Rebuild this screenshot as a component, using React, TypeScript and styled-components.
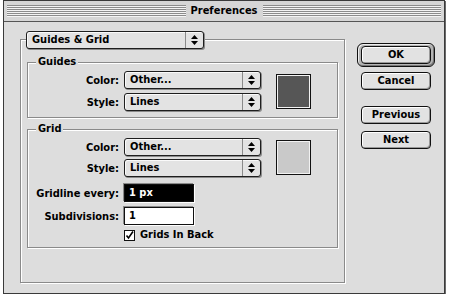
import styled, { createGlobalStyle } from "styled-components";

const GlobalStyle = createGlobalStyle`
  body {
    margin: 0;
    background: #ffffff;
    font-family: "DejaVu Sans Condensed", "DejaVu Sans", sans-serif;
    font-weight: bold;
    font-size: 11px;
    color: #000;
  }
`;

//#region window
const Window = styled.div`
  box-sizing: border-box;
  margin-left: 3px;
  width: 442px;
  height: 294px;
  border: 1px solid #3a3a3a;
  box-shadow: 1px 1px 0 #6a6a6a;
  background: #dddddd;
  display: flex;
  flex-direction: column;
`;

const TitleBar = styled.div`
  height: 20px;
  border-bottom: 1px solid #555;
  background: #d6d6d6;
  display: flex;
  align-items: center;
  padding: 0 3px 0 3px;
  gap: 5px;
`;

const Stripes = styled.div`
  flex: 1;
  height: 12px;
  background: repeating-linear-gradient(to bottom, #8c8c8c 0 1px, #f4f4f4 1px 2px);
`;

const Title = styled.div`
  font-size: 11px;
  line-height: 14px;
`;

const Body = styled.div`
  display: flex;
  align-items: flex-start;
`;
//#endregion window

//#region groups
const OuterGroup = styled.div`
  box-sizing: border-box;
  margin: 17px 0 0 16px;
  width: 325px;
  height: 244px;
  border: 1px solid #8a8a8a;
  box-shadow: 1px 1px 0 #fff, inset 1px 1px 0 #fff;
  padding: 0 6px;
  display: flex;
  flex-direction: column;
`;

const Group = styled.div<{ $height: number; $gap: number }>`
  box-sizing: border-box;
  height: ${(p) => p.$height}px;
  margin-top: ${(p) => p.$gap}px;
  border: 1px solid #8a8a8a;
  box-shadow: 1px 1px 0 #fff, inset 1px 1px 0 #fff;
  display: flex;
  flex-direction: column;
`;

const Legend = styled.div`
  align-self: flex-start;
  margin: -8px 0 0 8px;
  padding: 0 2px;
  line-height: 14px;
  background: #dddddd;
`;

const FormGrid = styled.div<{ $rowGap: number }>`
  display: grid;
  grid-template-columns: 91px 137px auto;
  column-gap: 5px;
  row-gap: ${(p) => p.$rowGap}px;
  align-items: center;
  margin-top: 2px;
`;

const Label = styled.div<{ $top?: number }>`
  grid-column: 1;
  text-align: right;
  white-space: nowrap;
  margin-top: ${(p) => p.$top ?? 0}px;
`;

const Cell = styled.div<{ $top?: number }>`
  grid-column: 2;
  margin-top: ${(p) => p.$top ?? 0}px;
  display: flex;
`;

const HeaderPopup = styled.div`
  margin: -9px 0 0 -1px;
  display: flex;
`;
//#endregion groups

//#region controls
const PopupBox = styled.div<{ $width: number }>`
  box-sizing: border-box;
  width: ${(p) => p.$width}px;
  height: 18px;
  border: 1px solid #1e1e1e;
  border-radius: 3px;
  background: #e3e3e3;
  box-shadow: inset 1px 1px 0 #fafafa, 1px 1px 0 #8a8a8a;
  display: flex;
  align-items: center;
`;

const PopupText = styled.div`
  flex: 1;
  padding-left: 5px;
  line-height: 14px;
`;

const PopupArrows = styled.div`
  width: 17px;
  height: 100%;
  border-left: 1px solid #8a8a8a;
  display: flex;
  align-items: center;
  justify-content: center;
`;

const Swatch = styled.div<{ $fill: string }>`
  grid-row: 1 / 3;
  grid-column: 3;
  margin-left: 10px;
  width: 35px;
  height: 35px;
  box-sizing: border-box;
  border: 1px solid #111;
  box-shadow: inset 0 0 0 1px #f2f2f2;
  background: ${(p) => p.$fill};
`;

const TextField = styled.div<{ $selected?: boolean }>`
  box-sizing: border-box;
  width: 70px;
  height: 18px;
  border: 1px solid #111;
  box-shadow: -1px -1px 0 #8a8a8a, 1px 1px 0 #fff;
  background: ${(p) => (p.$selected ? "#000" : "#fff")};
  color: ${(p) => (p.$selected ? "#fff" : "#000")};
  padding-left: 4px;
  line-height: 16px;
`;

const CheckRow = styled.div`
  display: flex;
  align-items: center;
  gap: 5px;
  line-height: 14px;
`;

const CheckBox = styled.div`
  box-sizing: border-box;
  width: 11px;
  height: 11px;
  border: 1px solid #111;
  background: #fff;
  display: flex;
  align-items: center;
  justify-content: center;
`;
//#endregion controls

//#region buttons
const ButtonColumn = styled.div`
  margin: 21px 9px 0 auto;
  width: 78px;
  display: flex;
  flex-direction: column;
  align-items: center;
`;

const DefaultRing = styled.div`
  box-sizing: border-box;
  width: 78px;
  padding: 2px 3px;
  border: 1px solid #111;
  border-radius: 6px;
  background: #b4b4b4;
  box-shadow: inset 1px 1px 0 #eee, inset -1px -1px 0 #777;
`;

const Button = styled.div<{ $top?: number }>`
  box-sizing: border-box;
  width: 70px;
  height: 18px;
  margin-top: ${(p) => p.$top ?? 0}px;
  border: 1px solid #111;
  border-radius: 4px;
  background: #e2e2e2;
  box-shadow: inset 1px 1px 0 #fff, inset -1px -1px 0 #999;
  display: flex;
  align-items: center;
  justify-content: center;
  line-height: 14px;
`;
//#endregion buttons

function Arrows() {
  return (
    <svg width="7" height="10" viewBox="0 0 7 10">
      <path d="M3.5 0 L7 4 L0 4 Z" fill="#000" />
      <path d="M0 6 L7 6 L3.5 10 Z" fill="#000" />
    </svg>
  );
}

function Popup({ label, width }: { label: string; width: number }) {
  return (
    <PopupBox $width={width}>
      <PopupText>{label}</PopupText>
      <PopupArrows>
        <Arrows />
      </PopupArrows>
    </PopupBox>
  );
}

export default function App() {
  return (
    <>
      <GlobalStyle />
      <Window>
        <TitleBar>
          <Stripes />
          <Title>Preferences</Title>
          <Stripes />
        </TitleBar>
        <Body>
          <OuterGroup>
            <HeaderPopup>
              <Popup label="Guides & Grid" width={178} />
            </HeaderPopup>
            <Group $height={56} $gap={13}>
              <Legend>Guides</Legend>
              <FormGrid $rowGap={4}>
                <Label>Color:</Label>
                <Cell>
                  <Popup label="Other..." width={137} />
                </Cell>
                <Swatch $fill="#565656" />
                <Label>Style:</Label>
                <Cell>
                  <Popup label="Lines" width={137} />
                </Cell>
              </FormGrid>
            </Group>
            <Group $height={119} $gap={11}>
              <Legend>Grid</Legend>
              <FormGrid $rowGap={3}>
                <Label>Color:</Label>
                <Cell>
                  <Popup label="Other..." width={137} />
                </Cell>
                <Swatch $fill="#c9c9c9" />
                <Label>Style:</Label>
                <Cell>
                  <Popup label="Lines" width={137} />
                </Cell>
                <Label $top={4}>Gridline every:</Label>
                <Cell $top={4}>
                  <TextField $selected>1 px</TextField>
                </Cell>
                <Label $top={2}>Subdivisions:</Label>
                <Cell $top={2}>
                  <TextField>1</TextField>
                </Cell>
                <Cell>
                  <CheckRow>
                    <CheckBox>
                      <svg width="9" height="9" viewBox="0 0 9 9">
                        <path d="M1.5 4.5 L3.5 7 L8 0.5" stroke="#000" strokeWidth="1.6" fill="none" />
                      </svg>
                    </CheckBox>
                    Grids In Back
                  </CheckRow>
                </Cell>
              </FormGrid>
            </Group>
          </OuterGroup>
          <ButtonColumn>
            <DefaultRing>
              <Button>OK</Button>
            </DefaultRing>
            <Button $top={5}>Cancel</Button>
            <Button $top={16}>Previous</Button>
            <Button $top={7}>Next</Button>
          </ButtonColumn>
        </Body>
      </Window>
    </>
  );
}
